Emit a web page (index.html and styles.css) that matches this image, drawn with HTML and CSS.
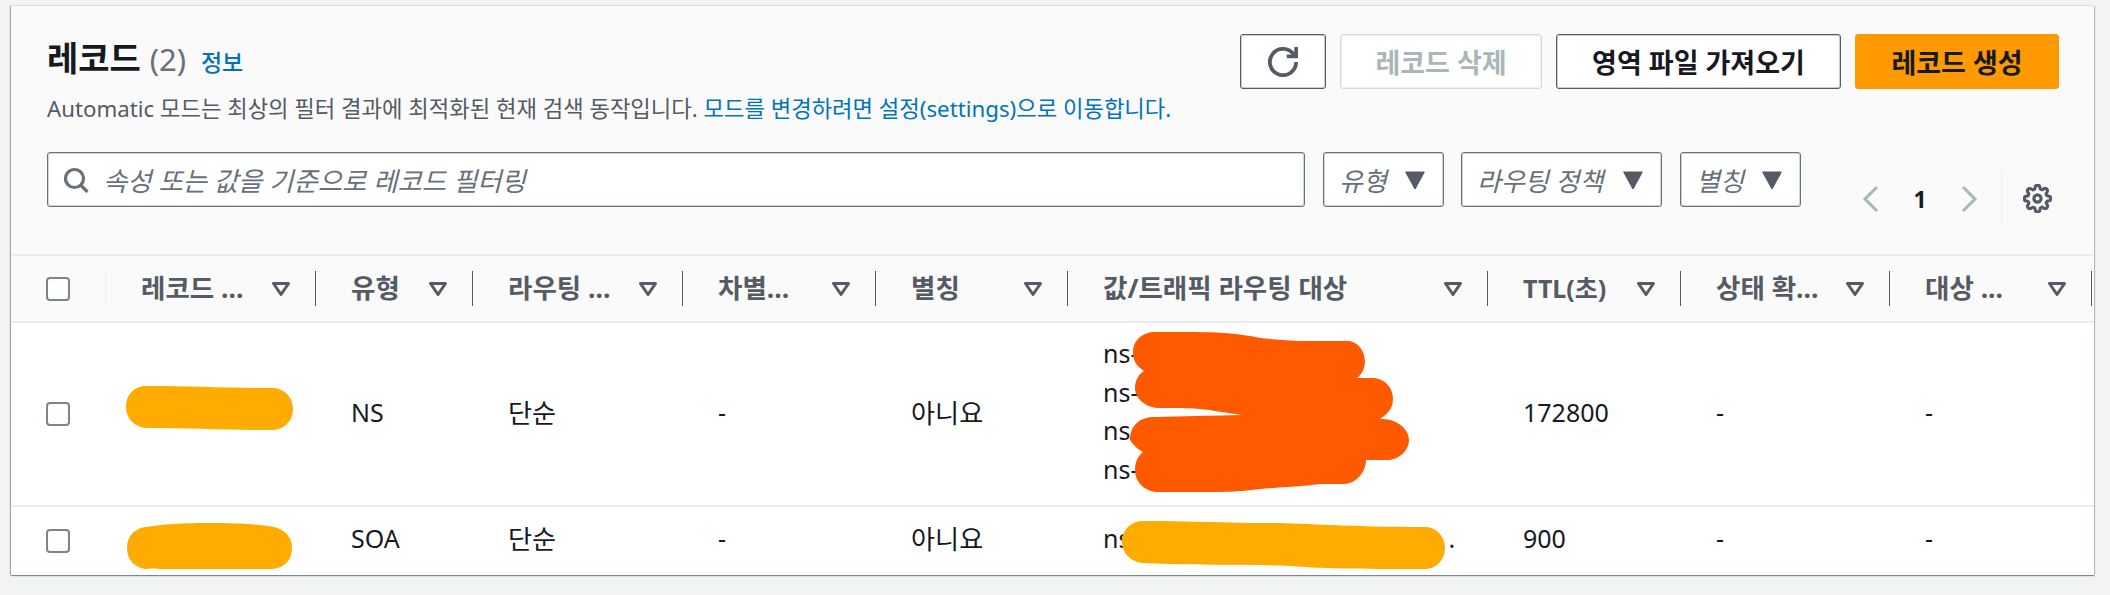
FILE: index.html
```html
<!DOCTYPE html>
<html lang="ko">
<head>
<meta charset="utf-8">
<title>레코드</title>
<link rel="stylesheet" href="styles.css">
</head>
<body>
<svg class="defs" width="0" height="0" aria-hidden="true">
  <symbol id="sort" viewBox="0 0 18 14"><path d="M1.5 1.5h15L9 12.5z" fill="none" stroke="currentColor" stroke-width="3" stroke-linejoin="round"/></symbol>
  <symbol id="caret" viewBox="0 0 18 16"><path d="M1 1h16L9 15.5z" fill="currentColor" stroke="currentColor" stroke-width="1.5" stroke-linejoin="round"/></symbol>
</svg>
<main class="card">
  <section class="top">
    <div class="title-row">
      <div class="heading">
        <h2 class="title">레코드 <span class="count">(2)</span> <a class="info">정보</a></h2>
        <p class="desc">Automatic 모드는 최상의 필터 결과에 최적화된 현재 검색 동작입니다. <a class="link">모드를 변경하려면 설정(settings)으로 이동합니다.</a></p>
      </div>
      <div class="actions">
        <button class="btn btn-icon" type="button"><svg width="30" height="30" viewBox="0 0 16 16" fill="none" stroke="#545b64" stroke-width="2"><path d="M10 5h5V0"/><path d="M15 8a7 7 0 1 1-1.2-3.9"/></svg></button>
        <button class="btn btn-disabled btn-delete" type="button">레코드 삭제</button>
        <button class="btn btn-import" type="button">영역 파일 가져오기</button>
        <button class="btn btn-primary" type="button">레코드 생성</button>
      </div>
    </div>
    <div class="filter-row">
      <div class="search">
        <svg class="search-icon" width="26" height="26" viewBox="0 0 26 26" fill="none" stroke="#687078" stroke-width="3.2"><circle cx="11.5" cy="11.5" r="9"/><path d="M17.5 18l7 7"/></svg>
        <span class="placeholder">속성 또는 값을 기준으로 레코드 필터링</span>
      </div>
      <div class="select select-type"><span>유형</span><svg width="20" height="18"><use href="#caret"/></svg></div>
      <div class="select select-policy"><span>라우팅 정책</span><svg width="20" height="18"><use href="#caret"/></svg></div>
      <div class="select select-alias"><span>별칭</span><svg width="20" height="18"><use href="#caret"/></svg></div>
      <div class="pager">
        <svg class="chev" width="18" height="28" viewBox="0 0 18 28" fill="none" stroke="#aab7b8" stroke-width="3"><path d="M15 2L3 14l12 12"/></svg>
        <span class="page-num">1</span>
        <svg class="chev" width="18" height="28" viewBox="0 0 18 28" fill="none" stroke="#aab7b8" stroke-width="3"><path d="M3 2l12 12L3 26"/></svg>
        <span class="pager-sep"></span>
        <svg class="gear" width="29" height="29" viewBox="0 0 24 24" fill="none" stroke="#545b64" stroke-width="2.6" stroke-linejoin="round"><circle cx="12" cy="12" r="3"/><path d="M19.4 15a1.65 1.65 0 0 0 .33 1.82l.06.06a2 2 0 0 1 0 2.83 2 2 0 0 1-2.83 0l-.06-.06a1.65 1.65 0 0 0-1.82-.33 1.65 1.65 0 0 0-1 1.51V21a2 2 0 0 1-2 2 2 2 0 0 1-2-2v-.09A1.65 1.65 0 0 0 9 19.4a1.65 1.65 0 0 0-1.82.33l-.06.06a2 2 0 0 1-2.83 0 2 2 0 0 1 0-2.83l.06-.06a1.65 1.65 0 0 0 .33-1.82 1.65 1.65 0 0 0-1.51-1H3a2 2 0 0 1-2-2 2 2 0 0 1 2-2h.09A1.65 1.65 0 0 0 4.6 9a1.65 1.65 0 0 0-.33-1.82l-.06-.06a2 2 0 0 1 0-2.83 2 2 0 0 1 2.83 0l.06.06a1.65 1.65 0 0 0 1.82.33H9a1.65 1.65 0 0 0 1-1.51V3a2 2 0 0 1 2-2 2 2 0 0 1 2 2v.09a1.65 1.65 0 0 0 1 1.51 1.65 1.65 0 0 0 1.82-.33l.06-.06a2 2 0 0 1 2.83 0 2 2 0 0 1 0 2.83l-.06.06a1.65 1.65 0 0 0-.33 1.82V9a1.65 1.65 0 0 0 1.51 1H21a2 2 0 0 1 2 2 2 2 0 0 1-2 2h-.09a1.65 1.65 0 0 0-1.51 1z"/></svg>
      </div>
    </div>
  </section>
  <table class="records">
    <colgroup>
      <col class="c-check"><col class="c-name"><col class="c-type"><col class="c-policy"><col class="c-diff"><col class="c-alias"><col class="c-value"><col class="c-ttl"><col class="c-health"><col class="c-target">
    </colgroup>
    <thead>
      <tr>
        <th class="th-check"><div class="th-in th-in-check"><span class="box"></span></div></th>
        <th><div class="th-in"><span>레코드 ...</span><svg class="sort" width="18" height="14"><use href="#sort"/></svg></div></th>
        <th><div class="th-in"><span>유형</span><svg class="sort" width="18" height="14"><use href="#sort"/></svg></div></th>
        <th><div class="th-in"><span>라우팅 ...</span><svg class="sort" width="18" height="14"><use href="#sort"/></svg></div></th>
        <th><div class="th-in"><span>차별...</span><svg class="sort" width="18" height="14"><use href="#sort"/></svg></div></th>
        <th><div class="th-in"><span>별칭</span><svg class="sort" width="18" height="14"><use href="#sort"/></svg></div></th>
        <th><div class="th-in"><span>값/트래픽 라우팅 대상</span><svg class="sort" width="18" height="14"><use href="#sort"/></svg></div></th>
        <th><div class="th-in"><span class="ttl">TTL(초)</span><svg class="sort" width="18" height="14"><use href="#sort"/></svg></div></th>
        <th><div class="th-in"><span>상태 확...</span><svg class="sort" width="18" height="14"><use href="#sort"/></svg></div></th>
        <th><div class="th-in th-in-last"><span>대상 ...</span><svg class="sort" width="18" height="14"><use href="#sort"/></svg></div></th>
      </tr>
    </thead>
    <tbody>
      <tr class="row-ns">
        <td class="td-check"><span class="box"></span></td>
        <td></td>
        <td>NS</td>
        <td class="ko">단순</td>
        <td>-</td>
        <td class="ko">아니요</td>
        <td class="td-values"><div>ns-</div><div>ns-</div><div>ns-</div><div>ns-</div></td>
        <td>172800</td>
        <td>-</td>
        <td>-</td>
      </tr>
      <tr class="row-soa">
        <td class="td-check"><span class="box"></span></td>
        <td></td>
        <td>SOA</td>
        <td class="ko">단순</td>
        <td>-</td>
        <td class="ko">아니요</td>
        <td><span class="soa-value">ns<span class="soa-gap"></span>.</span></td>
        <td>900</td>
        <td>-</td>
        <td>-</td>
      </tr>
    </tbody>
  </table>
  <svg class="scribbles" viewBox="11 6 2083 569" aria-hidden="true">
    <path class="amber" d="M146 386C190 386 230 388 272 388C285 388 293 398 293 409C293 421 284 430 272 430C230 430 190 428 146 428C134 427 126 418 126 407C126 395 134 386 146 386z"/>
    <path class="amber" d="M146 527C160 525 175 523 210 523C240 523 255 524 274 527C286 530 292 538 292 548C292 560 284 569 270 569L160 569C150 568 148 569 146 569C135 568 127 560 127 548C127 537 134 528 146 527z"/>
    <path class="amber" d="M1143 521C1190 521 1230 523 1265 523C1310 523 1340 527 1425 527C1437 527 1445 537 1445 548C1445 560 1436 569 1425 569C1370 569 1330 569 1290 566C1250 564 1200 566 1143 563C1131 562 1122 553 1122 542C1122 530 1131 521 1143 521z"/>
    <path class="orange" d="M1155 332C1190 332 1225 331 1250 336C1280 342 1310 341 1343 341C1358 339 1365 352 1365 361C1365 368 1362 374 1357 378L1372 378C1385 378 1393 388 1393 399C1393 408 1388 414 1380 419C1398 418 1409 430 1409 440C1409 451 1398 460 1388 460L1366 460C1366 472 1356 484 1344 484L1320 484C1300 487 1280 487 1260 489C1240 492 1220 492 1200 492L1158 492C1145 492 1135 482 1135 470C1135 462 1138 456 1143 452C1135 448 1130 440 1130 440C1130 425 1140 417 1155 417C1180 416 1215 416 1242 415L1215 411C1205 409 1195 408 1160 408C1145 408 1135 398 1135 388C1135 380 1139 374 1144 371C1136 366 1133 360 1133 352C1133 340 1143 332 1155 332z"/>
  </svg>
</main>
</body>
</html>
```
FILE: styles.css
```css
* { box-sizing: border-box; }
html, body { margin: 0; height: 100%; }
body {
  background: #f2f3f3;
  padding: 6px 16px 0 11px;
  font-family: "Noto Sans", "Noto Sans CJK KR", sans-serif;
  font-size: 25px;
  color: #16191f;
  overflow: hidden;
}
.defs { position: absolute; }
.card {
  position: relative;
  height: 569px;
  background: #fff;
  box-shadow: 0 1px 1px 0 rgba(0, 28, 36, .45), 1px 0 1px 0 rgba(0, 28, 36, .2), -1px 0 1px 0 rgba(0, 28, 36, .3);
}
.top {
  height: 250px;
  padding: 28px 35px 0 36px;
  background: #fafafa;
  border-bottom: 2px solid #eaeded;
}
.title-row { display: flex; justify-content: space-between; align-items: flex-start; height: 118px; }
.title { margin: 0; height: 59px; font-size: 34px; line-height: 48px; font-weight: 700; white-space: nowrap; }
.count { font-weight: 400; font-size: 31px; color: #687078; }
.info { margin-left: 6px; font-size: 23px; font-weight: 500; color: #0073bb; }
.desc { margin: 0; font-size: 22.25px; line-height: 32px; color: #545b64; white-space: nowrap; }
.link { color: #0073bb; }
.actions { display: flex; gap: 14px; }
.btn {
  height: 55px;
  padding: 0;
  border: 1px solid #545b64;
  box-shadow: inset 0 0 0 1px rgba(84, 91, 100, .3);
  border-radius: 3px;
  background: #fff;
  color: #545b64;
  font: 700 27px "Noto Sans", "Noto Sans CJK KR", sans-serif;
  display: flex;
  align-items: center;
  justify-content: center;
}
.btn-icon { width: 86px; }
.btn-delete { width: 202px; }
.btn-import { width: 285px; color: #16191f; }
.btn-disabled { border-color: #d5dbdb; color: #aab7b8; box-shadow: inset 0 0 0 1px rgba(213, 219, 219, .4); }
.btn-primary { width: 204px; background: #ff9900; border-color: #ff9900; color: #16191f; box-shadow: none; }
.filter-row { display: flex; align-items: flex-start; }
.search {
  width: 1258px;
  height: 55px;
  display: flex;
  align-items: center;
  gap: 14px;
  padding-left: 15px;
  background: #fff;
  border: 1px solid #687078;
  box-shadow: inset 0 0 0 1px rgba(104, 112, 120, .3);
  border-radius: 3px;
  margin-right: 18px;
}
.placeholder { font-style: italic; font-size: 26.4px; color: #687078; }
.select {
  height: 55px;
  display: flex;
  align-items: center;
  justify-content: space-between;
  padding: 0 18px 0 15px;
  background: #fff;
  border: 1px solid #687078;
  box-shadow: inset 0 0 0 1px rgba(104, 112, 120, .3);
  border-radius: 3px;
  font-style: italic;
  font-size: 26px;
  color: #687078;
  white-space: nowrap;
}
.select svg { color: #545b64; flex: none; }
.select-type { width: 121px; margin-right: 17px; }
.select-policy { width: 201px; margin-right: 18px; }
.select-alias { width: 121px; }
.pager { display: flex; align-items: center; margin: 19px 0 0 61px; height: 55px; }
.chev { display: block; }
.page-num { width: 80px; text-align: center; font-weight: 700; font-size: 23px; color: #16191f; }
.pager-sep { width: 1px; height: 55px; background: #eaeded; margin: 0 21px 0 23px; }
.records { width: 2083px; table-layout: fixed; border-collapse: collapse; }
.c-check { width: 95px; }
.c-name { width: 210px; }
.c-type { width: 157px; }
.c-policy { width: 210px; }
.c-diff { width: 193px; }
.c-alias { width: 192px; }
.c-value { width: 420px; }
.c-ttl { width: 193px; }
.c-health { width: 209px; }
.c-target { width: 204px; }
th { height: 66px; padding: 0; background: #fafafa; border-bottom: 2px solid #eaeded; font-weight: 700; text-align: left; }
.th-in {
  display: flex;
  align-items: center;
  justify-content: space-between;
  height: 35px;
  padding: 0 25px 0 35px;
  border-right: 1px solid #545b64;
  color: #545b64;
  font-size: 26.5px;
  line-height: 35px;
  white-space: nowrap;
}
.th-in-last { margin-right: 2px; }
.ttl { font-size: 25px; }
.th-in-check { border-right-color: #eaeded; }
.sort { color: #545b64; flex: none; }
.box { display: block; width: 24px; height: 24px; background: #fff; border: 2px solid #7b858e; border-radius: 4px; }
td { padding: 0 0 5px 35px; background: #fff; white-space: nowrap; }
td.td-check { padding-bottom: 0; }
td.td-values { padding-bottom: 6px; }
td.ko { font-size: 26.2px; }
.row-ns { height: 184px; }
.row-ns td { border-bottom: 2px solid #eaeded; }
.row-soa { height: 68px; }
.td-values div { height: 38.5px; line-height: 38.5px; }
.soa-gap { display: inline-block; width: 318px; }
.scribbles { position: absolute; left: 0; top: 0; width: 2083px; height: 569px; pointer-events: none; }
.amber { fill: #ffab00; }
.orange { fill: #ff5a00; }
```
